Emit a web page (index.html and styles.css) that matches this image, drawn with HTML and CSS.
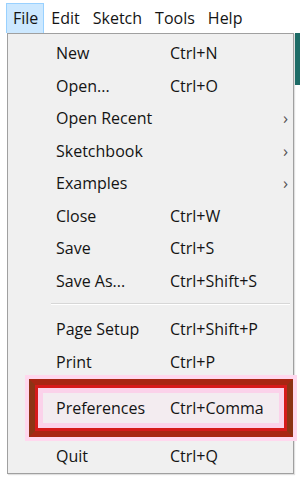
FILE: index.html
```html
<!DOCTYPE html>
<html lang="en">
<head>
    <meta charset="UTF-8">
    <title>File menu</title>
    <link rel="stylesheet" href="styles.css">
</head>
<body>
    <div class="menubar">
        <span class="top-item open">File</span>
        <span class="top-item">Edit</span>
        <span class="top-item">Sketch</span>
        <span class="top-item">Tools</span>
        <span class="top-item">Help</span>
    </div>

    <div class="stage">
        <div class="menu">
            <div class="row"><span>New</span><span>Ctrl+N</span></div>
            <div class="row"><span>Open...</span><span>Ctrl+O</span></div>
            <div class="row"><span>Open Recent</span><span></span><span class="arrow">›</span></div>
            <div class="row"><span>Sketchbook</span><span></span><span class="arrow">›</span></div>
            <div class="row"><span>Examples</span><span></span><span class="arrow">›</span></div>
            <div class="row"><span>Close</span><span>Ctrl+W</span></div>
            <div class="row"><span>Save</span><span>Ctrl+S</span></div>
            <div class="row"><span>Save As...</span><span>Ctrl+Shift+S</span></div>
            <div class="separator"></div>
            <div class="row"><span>Page Setup</span><span>Ctrl+Shift+P</span></div>
            <div class="row"><span>Print</span><span>Ctrl+P</span></div>
            <div class="marked">
                <div class="mark-box">
                    <div class="row"><span>Preferences</span><span>Ctrl+Comma</span></div>
                </div>
            </div>
            <div class="row"><span>Quit</span><span>Ctrl+Q</span></div>
        </div>
        <div class="backdrop"></div>
    </div>
</body>
</html>
```

FILE: styles.css
```css
body {
    margin: 0;
    background-color: #fff;
    font-family: "Open Sans", "Noto Sans", sans-serif;
    font-size: 16px;
    color: #141414;
    width: 300px;
    height: 479px;
    overflow: hidden;
}
.menubar {
    display: flex;
    height: 33px;
    padding-left: 6px;
    align-items: flex-end;
}
.top-item {
    height: 30px;
    line-height: 28px;
    padding: 0 5px 0 6px;
    box-sizing: border-box;
    border: 1px solid transparent;
}
.top-item.open {
    background-color: #cce8ff;
    border-color: #99d1ff;
    border-bottom: none;
}
.stage {
    display: flex;
    align-items: flex-start;
}
.menu {
    margin-left: 7px;
    width: 286px;
    background-color: #f0f0f0;
    border: 1px solid #a0a0a0;
    padding-top: 3px;
    box-shadow: 1px 1px 1px rgba(0,0,0,0.12);
}
.row {
    display: grid;
    grid-template-columns: 48px 114px 1fr 10px;
    height: 32.5px;
    line-height: 32.5px;
    white-space: nowrap;
}
.row span:first-child {
    grid-column: 2;
}
.row .arrow {
    grid-column: 4;
    color: #555;
    font-size: 17px;
}
.separator {
    height: 16px;
    padding-top: 6px;
    box-sizing: border-box;
    margin: 0 3px 0 43px;
}
.separator::after {
    content: "";
    display: block;
    border-top: 1px solid #d7d7d7;
    border-bottom: 1px solid #fff;
}
.marked {
    height: 62px;
    padding-top: 1px;
    box-sizing: border-box;
}
.mark-box {
    margin: 0 0 0 21px;
    width: 264px;
    height: 58px;
    box-sizing: border-box;
    border: 6px solid #8c3414;
    border-top-color: #a82612;
    border-bottom-color: #a82612;
    box-shadow: 0 0 0 4px #ffd8ee, inset 0 0 0 3px #d61a1a, inset 0 0 0 8px #fbd2ea;
    background-color: #f3ecf0;
}
.mark-box .row {
    grid-template-columns: 21px 114px 1fr;
    height: 46px;
    line-height: 46px;
}
.backdrop {
    width: 5px;
    height: 52px;
    margin-left: 1px;
    background-color: #1d6b66;
}
```
